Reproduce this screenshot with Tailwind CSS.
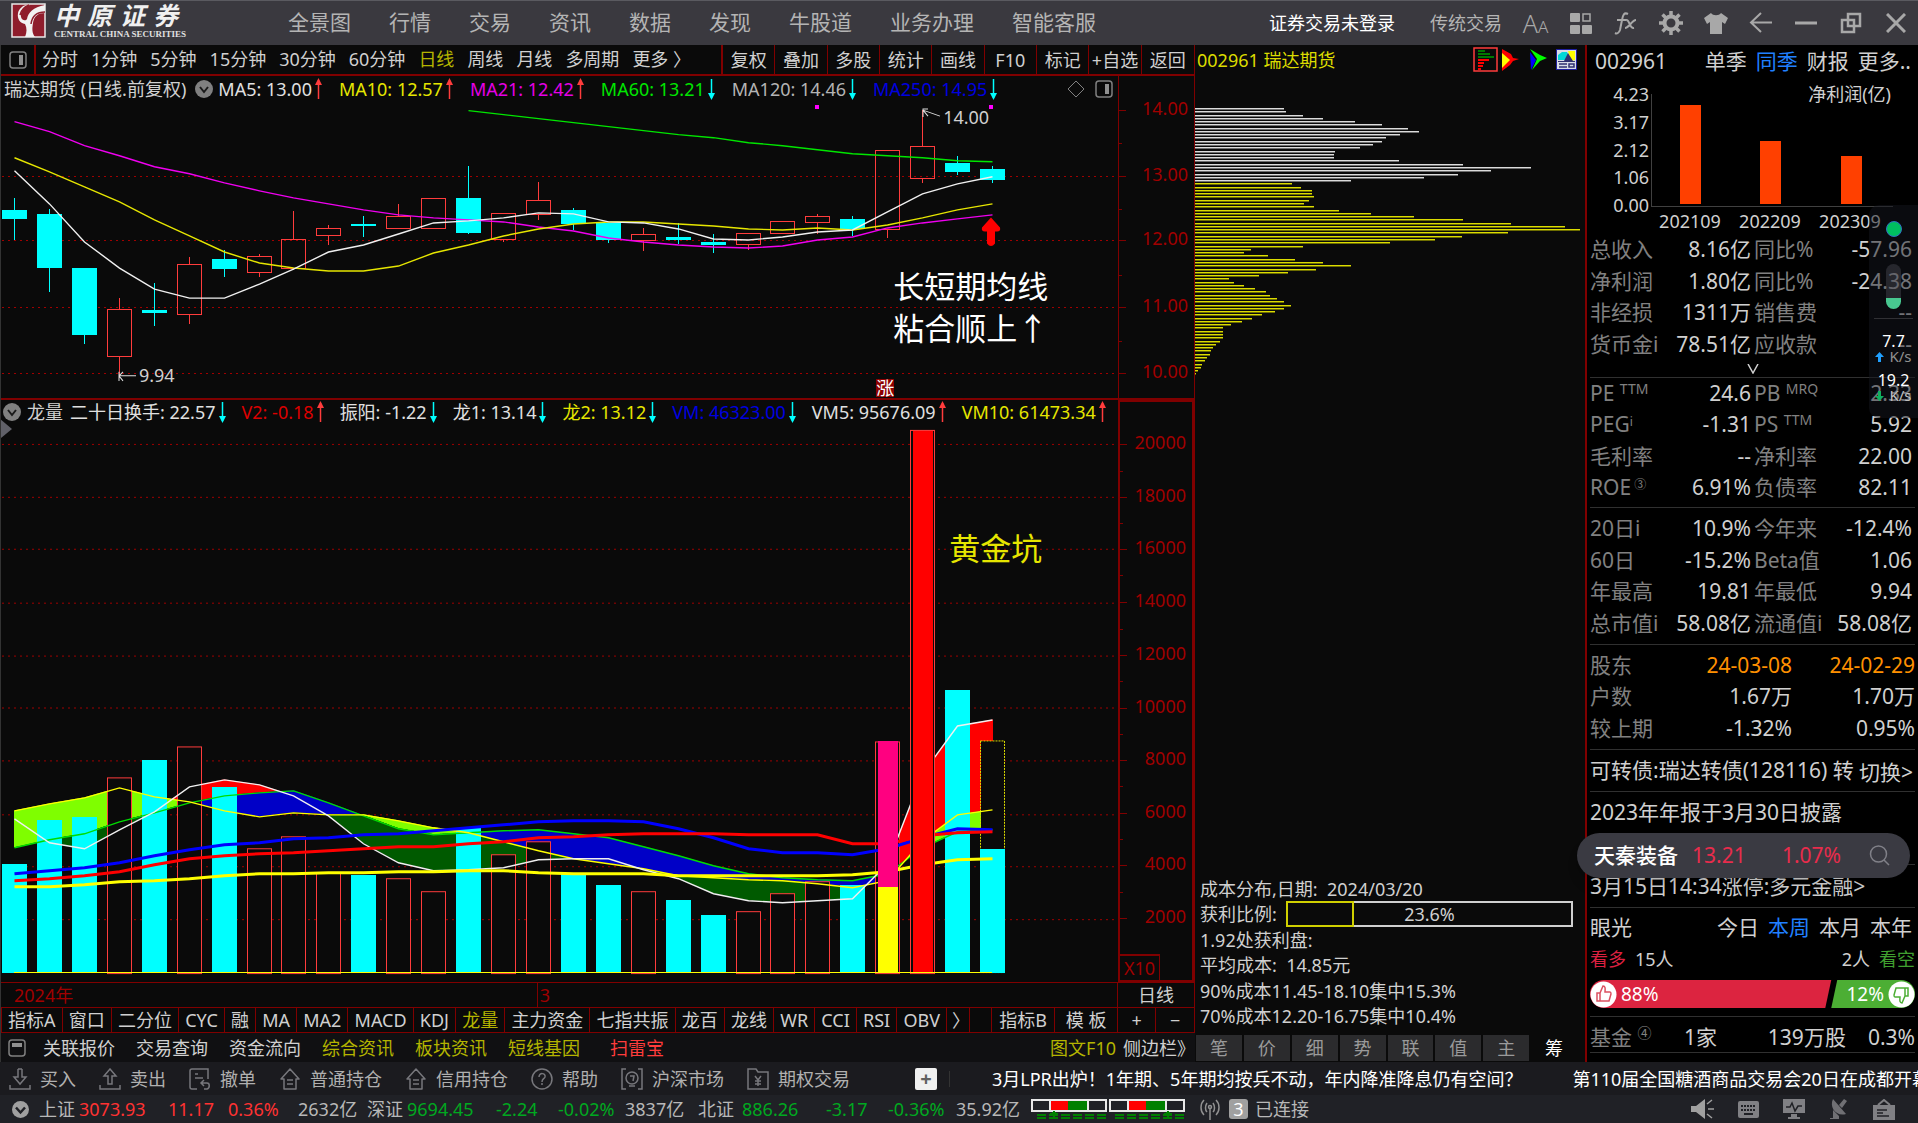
<!DOCTYPE html>
<html lang="zh-CN">
<head>
  <meta charset="UTF-8" />
  <meta name="viewport" content="width=device-width, initial-scale=1.0" />
  <title>002961 瑞达期货</title>
  <script src="https://cdn.jsdelivr.net/npm/@tailwindcss/browser@4"></script>
</head>
<body class="h-screen flex flex-col overflow-hidden bg-[#0a0a0a] text-[#d0d0d0] text-[18px] leading-none whitespace-nowrap font-['Noto_Sans','Noto_Sans_CJK_SC',sans-serif]">

  <!-- Shared icons -->
  <svg class="hidden">
    <symbol id="up" viewBox="0 0 13 22"><path d="M6.5 2V21" stroke="#ff3c3c" stroke-width="1.5"/><path d="M6.5 0L10 7H3z" fill="#ff3c3c"/></symbol>
    <symbol id="down" viewBox="0 0 13 22"><path d="M6.5 1V20" stroke="#00ffff" stroke-width="1.5"/><path d="M6.5 22L10 15H3z" fill="#00ffff"/></symbol>
    <symbol id="chev" viewBox="0 0 18 18"><circle cx="9" cy="9" r="9" fill="#808080"/><path d="M5 7l4 5 4-5" fill="none" stroke="#1a1a1a" stroke-width="2"/></symbol>
    <symbol id="panel" viewBox="0 0 18 18"><rect x="1" y="1" width="16" height="16" rx="3" fill="none" stroke="#808080" stroke-width="1.5"/><rect x="10" y="4" width="4" height="10" fill="#909090"/></symbol>
    <symbol id="home" viewBox="0 0 22 22"><path d="M2 11L11 1l9 10h-3v10H5V11zM8 12h6M8 16h6" fill="none" stroke="#77777c" stroke-width="1.5" stroke-linejoin="round"/></symbol>
  </svg>

  <!-- Title bar -->
  <header class="h-[45px] shrink-0 flex items-center bg-[#3a393f] border-t border-[#5a5a60] text-[#b4b4b4]">
    <div class="w-[288px] shrink-0 flex items-start gap-[8px] pl-[11px] pb-[3px]">
      <svg class="w-[35px] h-[35px]" viewBox="0 0 35 35">
        <rect x="1" y="1" width="33" height="33" fill="#8f1d2c" stroke="#e8e8e8" stroke-width="1.5"/>
        <path d="M2 2h17C13 3 9 8 10 14c1 4 5 4 6 2 1-6 6-12 18-14v8c-7 0-11 3-12 10-1 6-1 10 2 14H14c2-5 2-9 0-13C9 20 6 16 7 10 8 6 11 3 15 2z" fill="#f2f2f2"/>
        <path d="M34 9c-8 0-13 4-14 12M9 12c1-5 4-8 9-10" fill="none" stroke="#8f1d2c" stroke-width="1.5"/>
      </svg>
      <div class="flex flex-col">
        <div class="flex gap-[8px] text-[25px] font-bold italic text-[#f0f0f0]"><span>中</span><span>原</span><span>证</span><span>券</span></div>
        <div class="text-[9px] leading-[12px] font-bold text-[#e0e0e0] font-['Liberation_Serif',serif]">CENTRAL CHINA SECURITIES</div>
      </div>
    </div>
    <nav class="flex gap-[38px] pb-[2px] text-[21px]">
      <a href="#">全景图</a><a href="#">行情</a><a href="#">交易</a><a href="#">资讯</a><a href="#">数据</a><a href="#">发现</a><a href="#">牛股道</a><a href="#">业务办理</a><a href="#">智能客服</a>
    </nav>
    <div class="ml-auto flex items-center">
      <button class="mr-[35px] text-white">证券交易未登录</button>
      <button class="mr-[11px]">传统交易</button>
      <button class="w-[45px] flex justify-center items-baseline text-[#a8a8a8]" aria-label="字体"><span class="text-[25px] font-light">A</span><span class="text-[17px] font-light">A</span></button>
      <button class="w-[45px] flex justify-center" aria-label="布局"><svg class="w-[22px] h-[22px]" viewBox="0 0 22 22" fill="#a8a8a8"><rect x="0" y="1" width="10" height="9" rx="1"/><rect x="13" y="2" width="7" height="7" fill="none" stroke="#a8a8a8" stroke-width="1.5"/><rect x="0" y="13" width="10" height="9" rx="1"/><rect x="12" y="13" width="10" height="9" rx="1"/></svg></button>
      <button class="w-[45px] flex justify-center" aria-label="公式"><svg class="w-[24px] h-[24px]" viewBox="0 0 24 24" fill="none" stroke="#a8a8a8" stroke-width="2"><path d="M14 3c-4-2-5 1-6 6L6 19c-1 3-3 4-5 3M3 9h9M12 9c4-1 3 9 8 8M22 9c-4 0-7 8-11 8"/></svg></button>
      <button class="w-[45px] flex justify-center" aria-label="设置"><svg class="w-[24px] h-[24px]" viewBox="0 0 24 24" fill="none" stroke="#a8a8a8"><circle cx="12" cy="12" r="6.5" stroke-width="4"/><path d="M12 0v5M12 19v5M0 12h5M19 12h5M3.5 3.5L7 7M17 17l3.500 3.500M3.500 20.500L7 17M17 7l3.500-3.500" stroke-width="3.500"/></svg></button>
      <button class="w-[45px] flex justify-center" aria-label="皮肤"><svg class="w-[24px] h-[22px]" viewBox="0 0 24 22" fill="#a8a8a8"><path d="M7 1c2 3 8 3 10 0l7 5-3 6-3-2v12H6V10l-3 2-3-6z"/></svg></button>
      <button class="w-[45px] flex justify-center" aria-label="后退"><svg class="w-[24px] h-[22px]" viewBox="0 0 24 22" fill="none" stroke="#a8a8a8" stroke-width="2"><path d="M2 10.500H23M12 1L2 10.500 12 20"/></svg></button>
      <button class="w-[45px] flex justify-center" aria-label="最小化"><svg class="w-[22px] h-[22px]" viewBox="0 0 22 22"><path d="M0 11h22" stroke="#a8a8a8" stroke-width="3"/></svg></button>
      <button class="w-[45px] flex justify-center" aria-label="还原"><svg class="w-[22px] h-[22px]" viewBox="0 0 22 22" fill="none" stroke="#a8a8a8" stroke-width="2.500"><rect x="8" y="2" width="12" height="12"/><rect x="2" y="8" width="12" height="12"/></svg></button>
      <button class="w-[45px] flex justify-center" aria-label="关闭"><svg class="w-[20px] h-[20px]" viewBox="0 0 20 20"><path d="M1 1l18 18M19 1L1 19" stroke="#a8a8a8" stroke-width="3"/></svg></button>
    </div>
  </header>

  <main class="flex-1 min-h-0 flex">
    <!-- Left: price and volume charts -->
    <section class="flex-1 min-w-0 flex flex-col border-l border-[#333]">
      <div class="h-[31px] shrink-0 flex border-b-2 border-[#800000]">
        <button class="w-[35px] flex items-center justify-center border-r-2 border-[#800000]" aria-label="侧栏"><svg class="w-[18px] h-[18px]"><use href="#panel"/></svg></button>
        <div class="flex-1 flex items-center gap-[13px] pl-[6px] pb-px">
          <button>分时</button><button>1分钟</button><button>5分钟</button><button>15分钟</button><button>30分钟</button><button>60分钟</button><button class="text-[#b4b400]">日线</button><button>周线</button><button>月线</button><button>多周期</button><button>更多 〉</button>
        </div>
        <div class="w-[474px] grid grid-cols-9 border-l-2 border-r border-[#800000] divide-x divide-[#800000]">
          <button>复权</button><button>叠加</button><button>多股</button><button>统计</button><button>画线</button><button>F10</button><button>标记</button><button>+自选</button><button>返回</button>
        </div>
      </div>

      <!-- Price pane -->
      <div class="flex-[323] min-h-0 flex border-b-2 border-[#800000]">
        <div class="flex-1 relative min-w-0">
          <svg id="price" class="absolute inset-0 w-full h-full" viewBox="1 76 1117 321" preserveAspectRatio="none"></svg>
          <div class="relative flex items-center pt-[2px] pl-[3px]">
            <span class="mr-[9px]">瑞达期货 (日线.前复权)</span>
            <svg class="w-[18px] h-[18px] mr-[5px]"><use href="#chev"/></svg>
            <div id="maRow" class="flex items-center gap-[14px]"></div>
            <svg class="ml-auto w-[18px] h-[18px]" viewBox="0 0 18 18"><path d="M9 1l8 8-8 8-8-8z" fill="none" stroke="#808080"/></svg>
            <svg class="ml-[10px] mr-[5px] w-[18px] h-[18px]"><use href="#panel"/></svg>
          </div>
          <div id="priceNotes"></div>
        </div>
        <div id="priceAxis" class="w-[77px] relative border-x border-[#800000] text-[#a00000]"></div>
      </div>

      <!-- Volume pane -->
      <div class="flex-[584] min-h-0 flex border-b border-[#800000]">
        <div class="flex-1 relative min-w-0">
          <svg id="volume" class="absolute inset-0 w-full h-full" viewBox="1 399 1117 583" preserveAspectRatio="none"></svg>
          <div class="relative flex items-center pt-px pl-[2px]">
            <svg class="w-[18px] h-[18px] mr-[6px]"><use href="#chev"/></svg>
            <span class="mr-[7px]">龙量</span>
            <div id="vmRow" class="flex items-center gap-[13px]"></div>
          </div>
          <div id="volNotes"></div>
        </div>
        <div id="volAxis" class="w-[77px] relative border-2 border-r-[3px] border-[#800000] text-[#a00000]">
          <div class="absolute left-0 bottom-0 w-[40px] h-[26px] flex items-center justify-center border-t-2 border-r border-[#800000]">X10</div>
        </div>
      </div>

      <!-- Date row -->
      <div class="h-[24px] shrink-0 flex text-[#a00000] border-r border-[#800000]">
        <div class="flex-1 flex items-center">
          <span class="w-[48%] pl-[13px]">2024年</span>
          <span class="h-full flex items-center pl-[2px] border-l border-[#800000]">3</span>
        </div>
        <button class="w-[77px] border-l border-[#800000] text-[#d0d0d0]">日线</button>
      </div>

      <!-- Indicator tabs -->
      <div class="h-[26px] shrink-0 flex border border-[#800000] divide-x divide-[#800000]">
        <button class="grow px-[5px]">指标A</button><button class="grow px-[5px]">窗口</button><button class="grow px-[5px]">二分位</button><button class="grow px-[5px]">CYC</button><button class="grow px-[5px]">融</button><button class="grow px-[5px]">MA</button><button class="grow px-[5px]">MA2</button><button class="grow px-[5px]">MACD</button><button class="grow px-[5px]">KDJ</button><button class="grow px-[5px] text-[#b4b400]">龙量</button><button class="grow px-[5px]">主力资金</button><button class="grow px-[5px]">七指共振</button><button class="grow px-[5px]">龙百</button><button class="grow px-[5px]">龙线</button><button class="grow px-[5px]">WR</button><button class="grow px-[5px]">CCI</button><button class="grow px-[5px]">RSI</button><button class="grow px-[5px]">OBV</button>
        <button class="w-[23px] pl-[5px]">〉</button><span class="w-[22px]"></span>
        <button class="w-[63px]">指标B</button><button class="w-[63px]">模 板</button><button class="w-[38px]">+</button><button class="w-[38px]">−</button>
      </div>

      <!-- Link row -->
      <div class="h-[29px] shrink-0 flex items-center gap-[21px] pl-[7px] pr-[8px] bg-[#101012]">
        <svg class="w-[18px] h-[18px] -mr-[4px]" viewBox="0 0 18 18"><rect x="1" y="1" width="16" height="16" rx="3" fill="none" stroke="#808080" stroke-width="1.5"/><rect x="4" y="4" width="10" height="4" fill="#909090"/></svg>
        <a href="#">关联报价</a><a href="#">交易查询</a><a href="#">资金流向</a>
        <a href="#" class="text-[#b4b400]">综合资讯</a><a href="#" class="text-[#b4b400]">板块资讯</a><a href="#" class="text-[#b4b400]">短线基因</a>
        <a href="#" class="ml-[9px] text-[#ff3c3c]">扫雷宝</a>
        <a href="#" class="ml-auto -mr-[14px] text-[#b4b400]">图文F10</a><a href="#" class="-mr-[8px]">侧边栏》</a>
      </div>
    </section>

    <!-- Middle: cost distribution -->
    <section class="w-[390px] shrink-0 flex flex-col">
      <div class="h-[31px] flex items-center pl-[2px] pr-[8px] pb-[2px]">
        <h2 class="text-[#dcdc00]">002961 瑞达期货</h2>
        <div class="ml-auto flex items-center gap-[4px]">
          <button aria-label="成本分布"><svg class="w-[25px] h-[25px]" viewBox="0 0 25 25"><rect x="1" y="1" width="23" height="23" fill="#0a0a0a" stroke="#ff3c3c" stroke-width="1.500"/><path d="M5 4h7M5 7h12M5 10h16" stroke="#007800" stroke-width="2"/><path d="M5 13h11M5 16h6M5 19h5M5 22h3" stroke="#ff0000" stroke-width="2"/></svg></button>
          <button aria-label="回放"><svg class="w-[17px] h-[22px]" viewBox="0 0 17 22"><path d="M0 0l9 5 2 4 6 1-6 2-3 4-8 6z" fill="#ff0000"/><path d="M0 4l8 7-8 8z" fill="#ffff00"/></svg></button>
          <button class="ml-[7px]" aria-label="前进"><svg class="w-[17px] h-[22px]" viewBox="0 0 17 22"><path d="M0 0l10 6 7 3-7 3-8 9 5-11z" fill="#00ff00"/><path d="M0 3l6 8-5 10z" fill="#0000ff"/></svg></button>
          <button class="ml-[5px]" aria-label="资料"><svg class="w-[21px] h-[21px]" viewBox="0 0 21 21"><rect x=".5" y=".5" width="20" height="20" fill="#d8dce8" stroke="#2020a0"/><path d="M12 2h7v9l-4 1z" fill="#ffff00"/><path d="M2 6l4-3h5l4 8H2z" fill="#00d8d8"/><path d="M12 4l5 8H8z" fill="#303070"/><path d="M2 12.500h17" stroke="#303070"/><path d="M3 15h8M3 18h8M13 15h5v3h-5z" fill="none" stroke="#303070" stroke-width="1.500"/></svg></button>
        </div>
      </div>
      <svg id="chips" class="w-full flex-1 min-h-0" viewBox="1195 76 390 800" preserveAspectRatio="none"></svg>
      <div class="pl-[5px] pr-[12px] pb-[6px] grid grid-rows-6 h-[159px] items-center">
        <p>成本分布,日期:&nbsp; 2024/03/20</p>
        <div class="flex items-center"><span class="w-[86px]">获利比例:</span>
          <div class="flex-1 h-[26px] flex border-2 border-[#d0d0d0] relative">
            <div class="-m-[2px] border-2 border-[#d0d000]" style="width: 24%"></div>
            <span class="absolute inset-0 flex items-center justify-center">23.6%</span>
          </div>
        </div>
        <p>1.92处获利盘:</p>
        <p>平均成本:&nbsp; 14.85元</p>
        <p>90%成本11.45-18.10集中15.3%</p>
        <p>70%成本12.20-16.75集中10.4%</p>
      </div>
      <div class="h-[27px] grid grid-cols-8 gap-x-[2px] pl-px pr-[8px] pb-px text-[#9a9a9a]">
        <button class="bg-[#2b2b2d]">笔</button><button class="bg-[#2b2b2d]">价</button><button class="bg-[#2b2b2d]">细</button><button class="bg-[#2b2b2d]">势</button><button class="bg-[#2b2b2d]">联</button><button class="bg-[#2b2b2d]">值</button><button class="bg-[#2b2b2d]">主</button><button class="text-white">筹</button>
      </div>
    </section>

    <!-- Right: fundamentals -->
    <aside class="relative w-[333px] shrink-0 flex flex-col bg-black border-l-2 border-[#800000] pl-[3px] pr-[3px] text-[21px]">
      <div class="h-[32px] flex items-center gap-[9px] pl-[5px] pr-[4px]">
        <h2 class="mr-auto">002961</h2>
        <button>单季</button><button class="text-[#2080ff]">同季</button><button>财报</button><button>更多..</button>
      </div>
      <div class="h-[157px] flex text-[18px]">
        <div class="w-[59px] h-[137px] flex flex-col justify-between items-end pt-[8px]"><span>4.23</span><span>3.17</span><span>2.12</span><span>1.06</span><span>0.00</span></div>
        <div class="relative flex-1">
          <svg class="w-full h-full" viewBox="1650 77 265 157" preserveAspectRatio="none" shape-rendering="crispEdges">
            <path d="M1652.500 94V206.500H1893" fill="none" stroke="#404040"/>
            <path d="M1681 105h21v99h-21zM1761 141h21v63h-21zM1841 156h21v48h-21z" fill="#ff4000"/>
          </svg>
          <span class="absolute right-[24px] top-[8px]">净利润(亿)</span>
          <div class="absolute left-px bottom-[4px] w-[240px] grid grid-cols-3 text-center"><span>202109</span><span>202209</span><span>202309</span></div>
        </div>
      </div>
      <table class="w-full h-[126px] shrink-0 table-fixed text-right">
        <colgroup><col class="w-[75px]"><col class="w-[86px]"><col class="w-[78px]"><col></colgroup>
        <tr><th class="font-normal text-left text-[#808080]">总收入</th><td>8.16亿</td><th class="font-normal text-left pl-[3px] text-[#808080]">同比%</th><td class="pr-[3px]">-57.96</td></tr>
        <tr><th class="font-normal text-left text-[#808080]">净利润</th><td>1.80亿</td><th class="font-normal text-left pl-[3px] text-[#808080]">同比%</th><td class="pr-[3px]">-24.38</td></tr>
        <tr><th class="font-normal text-left text-[#808080]">非经损</th><td>1311万</td><th class="font-normal text-left pl-[3px] text-[#808080]">销售费</th><td class="pr-[3px]">--</td></tr>
        <tr><th class="font-normal text-left text-[#808080]">货币金i</th><td>78.51亿</td><th class="font-normal text-left pl-[3px] text-[#808080]">应收款</th><td class="pr-[3px]">--</td></tr>
      </table>
      <div class="h-[17px] flex justify-center items-center"><svg class="w-[12px] h-[10px]" viewBox="0 0 12 10"><path d="M1 0l5 9 5-9" fill="none" stroke="#d0d0d0" stroke-width="1.500"/></svg></div>
      <div class="h-[130px] shrink-0 border-t border-[#303030] pb-[4px]">
        <table class="w-full h-full table-fixed text-right">
          <colgroup><col class="w-[75px]"><col class="w-[86px]"><col class="w-[98px]"><col></colgroup>
          <tr><th class="font-normal text-left text-[#808080]">PE <sup class="text-[14px]">TTM</sup></th><td>24.6</td><th class="font-normal text-left pl-[3px] text-[#808080]">PB <sup class="text-[14px]">MRQ</sup></th><td class="pr-[3px]">2.33</td></tr>
          <tr><th class="font-normal text-left text-[#808080]">PEG<sup class="text-[12px]">i</sup></th><td>-1.31</td><th class="font-normal text-left pl-[3px] text-[#808080]">PS <sup class="text-[14px]">TTM</sup></th><td class="pr-[3px]">5.92</td></tr>
          <tr><th class="font-normal text-left text-[#808080]">毛利率</th><td>--</td><th class="font-normal text-left pl-[3px] text-[#808080]">净利率</th><td class="pr-[3px]">22.00</td></tr>
          <tr><th class="font-normal text-left text-[#808080]">ROE<sup class="text-[12px]"> ③</sup></th><td>6.91%</td><th class="font-normal text-left pl-[3px] text-[#808080]">负债率</th><td class="pr-[3px]">82.11</td></tr>
        </table>
      </div>
      <div class="h-[137px] shrink-0 border-t border-[#303030] py-[5px]">
        <table class="w-full h-full table-fixed text-right">
          <colgroup><col class="w-[75px]"><col class="w-[86px]"><col class="w-[78px]"><col></colgroup>
          <tr><th class="font-normal text-left text-[#808080]">20日i</th><td>10.9%</td><th class="font-normal text-left pl-[3px] text-[#808080]">今年来</th><td class="pr-[3px]">-12.4%</td></tr>
          <tr><th class="font-normal text-left text-[#808080]">60日</th><td>-15.2%</td><th class="font-normal text-left pl-[3px] text-[#808080]">Beta值</th><td class="pr-[3px]">1.06</td></tr>
          <tr><th class="font-normal text-left text-[#808080]">年最高</th><td>19.81</td><th class="font-normal text-left pl-[3px] text-[#808080]">年最低</th><td class="pr-[3px]">9.94</td></tr>
          <tr><th class="font-normal text-left text-[#808080]">总市值i</th><td>58.08亿</td><th class="font-normal text-left pl-[3px] text-[#808080]">流通值i</th><td class="pr-[3px]">58.08亿</td></tr>
        </table>
      </div>
      <div class="h-[105px] shrink-0 border-t border-[#303030] py-[5px]">
        <table class="w-full h-full table-fixed text-right">
          <tr><th class="w-[80px] font-normal text-left text-[#808080]">股东</th><td class="w-[122px] text-[#ff9000]">24-03-08</td><td class="text-[#ff9000]">24-02-29</td></tr>
          <tr><th class="font-normal text-left text-[#808080]">户数</th><td>1.67万</td><td>1.70万</td></tr>
          <tr><th class="font-normal text-left text-[#808080]">较上期</th><td>-1.32%</td><td>0.95%</td></tr>
        </table>
      </div>
      <div class="h-[42px] shrink-0 border-t border-[#303030] flex items-center justify-between pr-[2px]"><span>可转债:瑞达转债(128116) 转</span><a href="#" class="pt-[4px]">切换&gt;</a></div>
      <div class="h-[73px] shrink-0 border-t border-[#303030] pt-[10px]">2023年年报于3月30日披露</div>
      <div class="h-[43px] shrink-0 border-t border-[#303030] flex items-center"><a href="#">3月15日14:34涨停:多元金融&gt;</a></div>
      <div class="h-[109px] shrink-0 border-t border-[#303030]">
        <div class="h-[41px] flex items-center gap-[9px] pr-[3px] pb-[2px]"><span class="mr-auto">眼光</span><button>今日</button><button class="text-[#2080ff]">本周</button><button>本月</button><button>本年</button></div>
        <div class="h-[20px] flex items-center gap-[9px] text-[18px]"><span class="text-[#dc2040]">看多</span><span class="mr-auto">15人</span><span>2人</span><span class="text-[#40a030]">看空</span></div>
        <div class="mt-[11px] h-[28px] relative flex items-center justify-between text-[19px] text-white">
          <svg class="absolute inset-0 w-full h-full" viewBox="0 0 326 28" preserveAspectRatio="none"><path d="M14 0h228l-6 28H14a14 14 0 0 1 0-28z" fill="#dc2440"/><path d="M248 0h64a14 14 0 0 1 0 28h-70z" fill="#4cae34"/></svg>
          <span class="relative flex items-center gap-[4px]"><svg class="w-[27px] h-[27px]" viewBox="0 0 27 27"><circle cx="13.500" cy="13.500" r="13" fill="#fff"/><path d="M7 12h3l3-7c3 0 2 4 2 6h5c1 0 1 1 1 2l-2 7H7zM10 12v8" fill="none" stroke="#dc5060" stroke-width="1.500"/></svg>88%</span>
          <span class="relative flex items-center gap-[4px]">12%<svg class="w-[27px] h-[27px] rotate-180" viewBox="0 0 27 27"><circle cx="13.500" cy="13.500" r="13" fill="#fff"/><path d="M7 12h3l3-7c3 0 2 4 2 6h5c1 0 1 1 1 2l-2 7H7zM10 12v8" fill="none" stroke="#4cae34" stroke-width="1.500"/></svg></span>
        </div>
      </div>
      <div class="h-[37px] shrink-0 border-y border-[#303030] flex items-center pt-[5px]"><span class="w-[94px] text-[#808080]">基金 <sup class="text-[14px]">④</sup></span><span class="mr-auto">1家</span><span class="mr-[22px]">139万股</span><span>0.3%</span></div>

      <!-- Floating network monitor -->
      <div class="absolute right-0 top-[160px] w-[49px] h-[213px] flex flex-col items-center rounded-l-[10px] bg-[#14161e]/50 text-white">
        <span class="mt-[16px] size-[16px] rounded-full bg-[#00c060] border border-[#3070c0]"></span>
        <span class="mt-[27px] w-[15px] h-[45px] rounded-full bg-linear-to-b from-[#50505a]/40 from-75% to-[#48c890] to-75%"></span>
        <span class="mt-[9px] w-[39px] border-t border-[#303034]"></span>
        <span class="mt-[14px] text-[16px]">7.7</span>
        <span class="flex items-center gap-[5px] text-[15px] text-[#909090]"><svg class="w-[9px] h-[10px]" viewBox="0 0 9 10"><path d="M4.500 0L9 5H6v5H3V5H0z" fill="#20a0ff"/></svg>K/s</span>
        <span class="mt-[8px] text-[16px]">19.2</span>
        <span class="flex items-center gap-[5px] text-[15px] text-[#c0c0c0]"><svg class="w-[9px] h-[10px]" viewBox="0 0 9 10"><path d="M4.500 10L9 5H6V0H3v5H0z" fill="#10b060"/></svg>K/s</span>
      </div>
      <!-- Floating quote pill -->
      <div class="absolute -left-[10px] right-[8px] top-[788px] h-[45px] flex items-center rounded-full bg-[#3a3a42] pl-[17px] pr-[20px] shadow-lg text-[#e82c4c]">
        <span class="mr-[14px] text-white font-medium">天秦装备</span><span class="mr-auto">13.21</span><span class="mr-[28px]">1.07%</span>
        <svg class="w-[21px] h-[21px]" viewBox="0 0 21 21"><circle cx="9.500" cy="9" r="8" fill="none" stroke="#808088" stroke-width="1.500"/><path d="M15 15l5 5" stroke="#808088" stroke-width="1.500"/></svg>
      </div>
    </aside>
  </main>

  <!-- Trade toolbar -->
  <div class="h-[33px] shrink-0 flex items-center overflow-hidden bg-[#1b1b1f] pl-[9px] text-[#b0b0b0]">
    <div class="shrink-0 flex items-center gap-[23px]">
      <button class="flex items-center gap-[9px]"><svg class="w-[22px] h-[22px]" viewBox="0 0 22 22" fill="none" stroke="#77777c" stroke-width="1.500"><path d="M1 17v4h20v-4M9 1v8H5l6 7 6-7h-4V1M9 1h4"/></svg>买入</button>
      <button class="flex items-center gap-[9px]"><svg class="w-[22px] h-[22px]" viewBox="0 0 22 22" fill="none" stroke="#77777c" stroke-width="1.500"><path d="M1 17v4h20v-4M9 16h4V8h4l-6-7-6 7h4z"/></svg>卖出</button>
      <button class="flex items-center gap-[9px]"><svg class="w-[22px] h-[22px]" viewBox="0 0 22 22" fill="none" stroke="#77777c" stroke-width="1.500"><path d="M8 21H3q-2 0-2-2V3q0-2 2-2h16v10M6 6h3M6 10h8M12 15h6c3 0 3 5 0 6h-3M15 12l-3 3 3 3"/></svg>撤单</button>
      <button class="flex items-center gap-[9px]"><svg class="w-[22px] h-[22px]"><use href="#home"/></svg>普通持仓</button>
      <button class="flex items-center gap-[9px]"><svg class="w-[22px] h-[22px]"><use href="#home"/></svg>信用持仓</button>
      <button class="flex items-center gap-[9px]"><svg class="w-[22px] h-[22px]" viewBox="0 0 22 22" fill="none" stroke="#77777c" stroke-width="1.500"><circle cx="11" cy="11" r="10"/><path d="M8 9c0-5 7-4 6 0-1 2-3 2-3 5M11 15v2"/></svg>帮助</button>
      <button class="flex items-center gap-[9px]"><svg class="w-[22px] h-[22px]" viewBox="0 0 22 22" fill="none" stroke="#77777c" stroke-width="1.500"><path d="M5 1H1v20h4M17 1h4v20h-4"/><circle cx="11" cy="10" r="6"/><path d="M9 8h4l-1 5M8 18h6"/></svg>沪深市场</button>
      <button class="flex items-center gap-[9px]"><svg class="w-[22px] h-[22px]" viewBox="0 0 22 22" fill="none" stroke="#77777c" stroke-width="1.500"><path d="M1 21V1h8l2 3h10v17zM8 8l3 4 3-4M11 12v6M8 13h6M8 16h6"/></svg>期权交易</button>
    </div>
    <button class="ml-[65px] shrink-0 size-[22px] bg-[#f0f0f0] text-[#606060] text-[20px] font-bold rounded-[2px] flex items-center justify-center" aria-label="添加">+</button>
    <span class="ml-[12px] h-[16px] border-l border-[#333]"></span>
    <a href="#" class="ml-[42px] shrink-0 text-white">3月LPR出炉！1年期、5年期均按兵不动，年内降准降息仍有空间？</a>
    <a href="#" class="ml-[50px] shrink-0 text-white">第110届全国糖酒商品交易会20日在成都开幕</a>
  </div>

  <!-- Index status bar -->
  <footer class="h-[28px] shrink-0 flex items-center bg-[#202126] pl-[12px] text-[#b8b8b8]">
    <svg class="w-[17px] h-[17px] mr-[10px]" viewBox="0 0 17 17"><circle cx="8.500" cy="8.500" r="8.500" fill="#a0a0a0"/><path d="M4 6.500l4.500 5 4.500-5" fill="none" stroke="#202126" stroke-width="2.500"/></svg>
    <span class="w-[40px]">上证</span><span class="w-[89px] text-[#ff3232]">3073.93</span><span class="w-[60px] text-[#ff3232]">11.17</span><span class="w-[70px] text-[#ff3232]">0.36%</span><span class="w-[69px]">2632亿</span>
    <span class="w-[40px]">深证</span><span class="w-[89px] text-[#00a820]">9694.45</span><span class="w-[62px] text-[#00a820]">-2.24</span><span class="w-[67px] text-[#00a820]">-0.02%</span><span class="w-[73px]">3837亿</span>
    <span class="w-[44px]">北证</span><span class="w-[84px] text-[#00a820]">886.26</span><span class="w-[62px] text-[#00a820]">-3.17</span><span class="w-[68px] text-[#00a820]">-0.36%</span><span class="w-[75px]">35.92亿</span>
    <svg class="w-[154px] h-[20px] mr-[15px]" viewBox="0 0 154 20" shape-rendering="crispEdges">
      <path d="M19 2h18v9H19zM97 2h18v9H97z" fill="#ff0000"/><path d="M37 2h20v9H37zM115 2h20v9h-20z" fill="#008000"/>
      <path d="M1 1h74v11H1zM79 1h74v11H79zM19 1v11M57 1v11M97 1v11M135 1v11" fill="none" stroke="#e8e8e8" stroke-width="1.500"/>
      <path d="M6 15.500h70M6 18.500h70M84 15.500h70M84 18.500h70" stroke="#008000" stroke-width="2" stroke-dasharray="9 3"/>
      <path d="M23 13v7M19 16l4-3 4 3M137 13v7M133 16l4-3 4 3" stroke="#008000" stroke-width="2" fill="none"/>
    </svg>
    <svg class="w-[20px] h-[22px] mr-[9px]" viewBox="0 0 20 22" fill="none" stroke="#909090" stroke-width="1.500"><path d="M4 17C0 13 0 6 4 2M16 17c4-4 4-11 0-15M7 14c-2-2-2-6 0-9M13 14c2-2 2-6 0-9M10 10v12"/><circle cx="10" cy="9" r="1.500"/></svg>
    <span class="w-[19px] h-[20px] mr-[7px] flex items-center justify-center rounded-[3px] bg-[#a0a0a0] text-white">3</span>
    <span>已连接</span>
    <div class="ml-auto mr-[23px] flex items-center gap-[24px]">
      <button aria-label="声音"><svg class="w-[23px] h-[20px]" viewBox="0 0 23 20" fill="#a0a0a0"><path d="M0 7h5l9-7v20l-9-7H0z"/><path d="M16 5l5-4M17 10h6M16 15l5 4" stroke="#a0a0a0" stroke-width="1.500"/></svg></button>
      <button aria-label="键盘"><svg class="w-[21px] h-[17px]" viewBox="0 0 21 17"><rect width="21" height="17" rx="2" fill="#808084"/><path d="M3 5h15M3 9h15" stroke="#202126" stroke-width="2" stroke-dasharray="2 1"/><path d="M6 13h9" stroke="#202126" stroke-width="2"/></svg></button>
      <button aria-label="监控"><svg class="w-[22px] h-[20px]" viewBox="0 0 22 20"><path d="M0 0h22v14H0zM8 15h6v3h3v2H5v-2h3z" fill="#808084"/><path d="M3 8h4l2-4 3 8 3-5h4" fill="none" stroke="#202126" stroke-width="1.500"/></svg></button>
      <button aria-label="卫星"><svg class="w-[20px] h-[20px]" viewBox="0 0 20 20" fill="#707074"><path d="M4 0C0 8 7 18 17 15zM4 11l6 6v3H1v-1h3zM10 6l5-6 3 2-5 7z"/></svg></button>
      <button aria-label="公告"><svg class="w-[22px] h-[21px]" viewBox="0 0 22 21"><path d="M0 6h22v15H0z" fill="#808084"/><path d="M5 6l6-5 6 5" fill="none" stroke="#808084" stroke-width="2"/><path d="M4 11h10M4 14h6M4 17h12" stroke="#202126" stroke-width="1.500"/></svg></button>
    </div>
  </footer>

  <script>
    const X0 = 14, STEP = 34.93, HALF = 12.5, BASE = 973;
    const cx = i => Math.round(X0 + STEP * i) + 0.5;

    // [up/down, high, body top, body bottom, low, volume top]
    const bars = [
      ['d',198,210,219,240,864],['d',209,214,267,291,820],['d',267,267,334,343,817],['u',297,308,355,377,777],
      ['d',282,309,312,325,760],['u',256,263,313,323,746],['d',249,258,268,276,787],['u',253,255,271,276,848],
      ['u',211,239,267,269,836],['u',225,228,235,245,872],['d',216,224,225,237,875],['u',204,216,228,228,878],
      ['u',198,198,228,228,891],['d',166,198,233,234,828],['u',213,213,239,242,854],['u',182,200,214,220,841],
      ['d',208,210,224,230,873],['d',223,223,240,243,885],['u',228,234,240,250,891],['d',223,237,240,244,900],
      ['d',234,242,245,252,915],['u',233,233,244,249,911],['u',221,221,233,233,893],['u',214,216,222,234,881],
      ['d',216,219,229,236,885],['u',150,150,229,238,741],['u',110,146,178,183,429],['d',156,163,172,175,689],
      ['d',166,169,180,183,849]
    ];
    const ma5 = [170,203,241,267,288,297,297,283,268,251,244,233,222,220,217,212,213,221,222,228,238,239,236,231,229,211,193,183,176];
    const ma10 = [157,171,186,201,219,235,251,262,267,270,270,265,252,244,235,228,223,221,221,223,225,228,229,227,229,224,217,209,203];
    const ma21 = [121,131,145,155,166,173,182,190,197,203,209,214,217,219,221,226,230,237,241,244,246,247,245,239,236,227,222,218,214];
    const ma60 = [110,114,118,122,126,130,134,137,142,145,149,153,155,157,160,161];
    const vBlue = [873,870,867,862,855,849,844,842,838,837,834,833,830,827,824,821,820,820,821,828,837,848,852,852,854,848,837,828,829];
    const vRed = [880,878,875,871,864,858,855,853,852,850,848,846,846,843,841,837,836,834,833,833,833,834,834,834,843,843,835,832,831];
    const vGold = [886,886,884,881,880,878,875,873,873,872,872,871,871,870,870,872,873,873,873,875,875,875,875,875,874,871,864,859,858];
    const vWhite = [818,842,848,829,811,786,779,784,795,815,843,862,870,869,867,859,858,858,869,878,893,900,902,900,898,863,773,725,719];
    const vYellow = [810,803,797,787,796,801,810,816,812,814,814,820,827,832,841,850,858,863,868,875,877,879,880,883,887,880,840,814,809];
    const vGreen = [847,839,833,821,812,802,795,792,790,802,815,828,834,832,830,829,833,837,846,855,865,873,877,879,880,873,847,831,829];

    const rect = (x, y, w, h, a) => `<rect x="${x}" y="${y}" width="${w}" height="${h}" ${a}/>`;
    const line = (arr, color, w = 1, from = 0) =>
      `<polyline points="${arr.map((y, i) => cx(i + from) + ',' + (y + 0.5)).join(' ')}" fill="none" stroke="${color}" stroke-width="${w}"/>`;
    const dots = (ys) => ys.map(y => `<path d="M2 ${y + 0.5}H1114" stroke="#a00000" stroke-dasharray="2 4"/>`).join('');
    const wrap = s => `<g shape-rendering="crispEdges">${s}</g>`;

    // Price pane
    let p = dots([176, 240, 306, 372]);
    bars.forEach(([t, hi, top, bot, lo], i) => {
      const x = cx(i), c = t === 'u' ? '#ff3c3c' : '#00ffff';
      p += `<path d="M${x} ${hi}V${top}M${x} ${bot}V${lo}" stroke="${c}"/>`;
      p += t === 'u'
        ? rect(x - 12, top + 0.5, 24, Math.max(bot - top, 1), `fill="none" stroke="${c}"`)
        : rect(x - HALF, top, 25, Math.max(bot - top, 2), `fill="${c}"`);
    });
    p += rect(815, 105, 4, 4, 'fill="#ff00ff"') + rect(989, 105, 4, 4, 'fill="#ff00ff"');
    p = wrap(p);
    p += line(ma60, '#00e600', 1.4, 13) + line(ma21, '#f000f0', 1.4) + line(ma10, '#e6e600', 1.4) + line(ma5, '#f0f0f0', 1.4);
    p += '<path d="M119 375H136M119 375l4-4M119 375l4 5M119 371v9" stroke="#e0e0e0" fill="none"/>';
    p += '<path d="M923 110L940 116M923 117V109h5M923 110l5 6" stroke="#e0e0e0" fill="none"/>';
    p += '<path d="M991 217l9 10q1 4-3 4h-2v12q-4 5-8 0V231h-2q-4 0-3-4z" fill="#ff0000"/>';
    document.getElementById('price').innerHTML = p;

    // Volume pane: bands between the three thin averages
    const at = (arr, x) => { const f = Math.min(Math.max((x - X0) / STEP, 0), 27.999), i = Math.floor(f); return arr[i] + (arr[i + 1] - arr[i]) * (f - i); };
    const bands = { '#80ff00': '', '#0000c8': '', '#ff0000': '', '#005a00': '' };
    for (let x = 14; x <= 992; x++) {
      const w = at(vWhite, x), y = at(vYellow, x), g = at(vGreen, x), hi = Math.min(y, g), lo = Math.max(y, g);
      bands[y < g ? '#80ff00' : '#0000c8'] += `M${x + 0.5} ${hi.toFixed(1)}V${lo.toFixed(1)}`;
      if (w < hi) bands['#ff0000'] += `M${x + 0.5} ${w.toFixed(1)}V${hi.toFixed(1)}`;
      if (w > lo) bands['#005a00'] += `M${x + 0.5} ${lo.toFixed(1)}V${w.toFixed(1)}`;
    }
    let v = dots([443, 496, 548, 602, 655, 707, 760, 814, 866, 919]);
    for (const c in bands) v += `<path d="${bands[c]}" stroke="${c}"/>`;
    bars.forEach((b, i) => {
      const x = cx(i), top = b[5];
      if (i === 28) v += rect(x - 12, 740.5, 24, 232, 'fill="#0a0a0a" stroke="#dcdc00" stroke-dasharray="2 1"');
      v += b[0] === 'u'
        ? rect(x - 12, top + 0.5, 24, BASE - top, 'fill="#0a0a0a" stroke="#ff3c3c"')
        : rect(x - HALF, top, 25, BASE - top, 'fill="#00ffff"');
    });
    v = wrap(v);
    v += line(vGreen, '#00dc00', 1.4) + line(vYellow, '#ffff00', 1.4) + line(vWhite, '#f0f0f0', 1.4);
    v += line(vBlue, '#0000ff', 3) + line(vRed, '#ff0000', 3) + line(vGold, '#ffff00', 3);
    v += wrap(rect(cx(25) - 10, 741, 20, 146, 'fill="#ff0080"') + rect(cx(25) - 10, 887, 20, 86, 'fill="#ffff00"') +
      rect(cx(26) - 12, 429.5, 24, 543, 'fill="#0a0a0a" stroke="#ff3c3c"') + rect(cx(26) - 10, 430, 20, 543, 'fill="#ff0000"') +
      rect(14, 972, 978, 1, 'fill="#ffff00"'));
    document.getElementById('volume').innerHTML = v + '<path d="M0 418l12 10-12 10z" fill="#606068"/>';

    // Axis labels, placed by share of pane height
    const axis = (id, labels, ticks, top, h) => {
      const pos = y => ((y - top) / h * 100) + '%';
      document.getElementById(id).insertAdjacentHTML('beforeend',
        labels.map(([t, y]) => `<span class="absolute left-0 w-[7px] border-t border-[#800000]" style="top:${pos(y)}"></span><span class="absolute right-[6px] -translate-y-1/2" style="top:${pos(y - 2)}">${t}</span>`).join('') +
        ticks.map(y => `<span class="absolute left-0 w-[3px] border-t border-[#800000]" style="top:${pos(y)}"></span>`).join(''));
    };
    axis('priceAxis', [['14.00', 110], ['13.00', 176], ['12.00', 240], ['11.00', 306], ['10.00', 372]], [143, 209, 274, 340], 76, 321);
    axis('volAxis', [20000, 18000, 16000, 14000, 12000, 10000, 8000, 6000, 4000, 2000].map((t, i) => [t, Math.round(443 + i * 52.9)]),
      [470, 522, 575, 629, 681, 734, 786, 840, 893], 401, 580);

    // Text notes on the charts
    const note = (t, x, y, top, h, cls) => `<span class="absolute -translate-y-1/2 ${cls}" style="left:${x / 1118 * 100}%;top:${(y - top) / h * 100}%">${t}</span>`;
    document.getElementById('priceNotes').innerHTML =
      note('9.94', 138, 374, 76, 321, '') + note('14.00', 943, 117, 76, 321, '') +
      note('长短期均线<br>粘合顺上↑', 893, 306, 76, 321, 'text-[31px] leading-[42px] text-white') +
      note('涨', 876, 387, 76, 321, 'bg-[#8c0000] text-white');
    document.getElementById('volNotes').innerHTML = note('黄金坑', 949, 547, 399, 583, 'text-[31px] text-[#e6e600]');

    // Indicator read-outs
    const readout = (id, items) => document.getElementById(id).innerHTML = items.map(([t, c, d]) =>
      `<span class="flex items-center ${c}">${t}<svg class="w-[13px] h-[22px]"><use href="#${d}"/></svg></span>`).join('');
    readout('maRow', [
      ['MA5: 13.00', 'text-[#e0e0e0]', 'up'], ['MA10: 12.57', 'text-[#e6e600]', 'up'], ['MA21: 12.42', 'text-[#e600e6]', 'up'],
      ['MA60: 13.21', 'text-[#00e600]', 'down'], ['MA120: 14.46', 'text-[#b4b4b4]', 'down'], ['MA250: 14.95', 'text-[#0000e0]', 'down']]);
    readout('vmRow', [
      ['二十日换手: 22.57', 'text-[#e0e0e0]', 'down'], ['V2: -0.18', 'text-[#dc0000]', 'up'], ['振阳: -1.22', 'text-[#e0e0e0]', 'down'],
      ['龙1: 13.14', 'text-[#e0e0e0]', 'down'], ['龙2: 13.12', 'text-[#e6e600]', 'down'], ['VM: 46323.00', 'text-[#0000e0]', 'down'],
      ['VM5: 95676.09', 'text-[#e0e0e0]', 'up'], ['VM10: 61473.34', 'text-[#e6e600]', 'up']]);

    // Cost distribution, bar lengths from high price to low
    const white = [89,91,108,128,160,187,213,224,205,191,187,178,165,140,139,139,204,268,336,296,263,229,156];
    const gold = [97,106,117,117,119,114,109,119,144,176,219,268,316,370,385,313,267,240,195,108,56,49,73,100,128,156,121,93,64,34,39,49,60,71,75,82,89,96,89,80,67,57,47,36,28,28,28,28,25,21,18,16,15,12,10,7,6,3,1];
    document.getElementById('chips').innerHTML = wrap([...white, ...gold].map((w, i) => {
      const y = Math.round(108 + i * 3.276), lit = i < white.length;
      return rect(1195, y, w, 1, `fill="${lit ? '#dcdcdc' : '#dcdc00'}"`) + rect(1195, y + 1, w, 1, `fill="${lit ? '#6e6e6e' : '#6e6e00'}"`);
    }).join(''));
  </script>
</body>
</html>
